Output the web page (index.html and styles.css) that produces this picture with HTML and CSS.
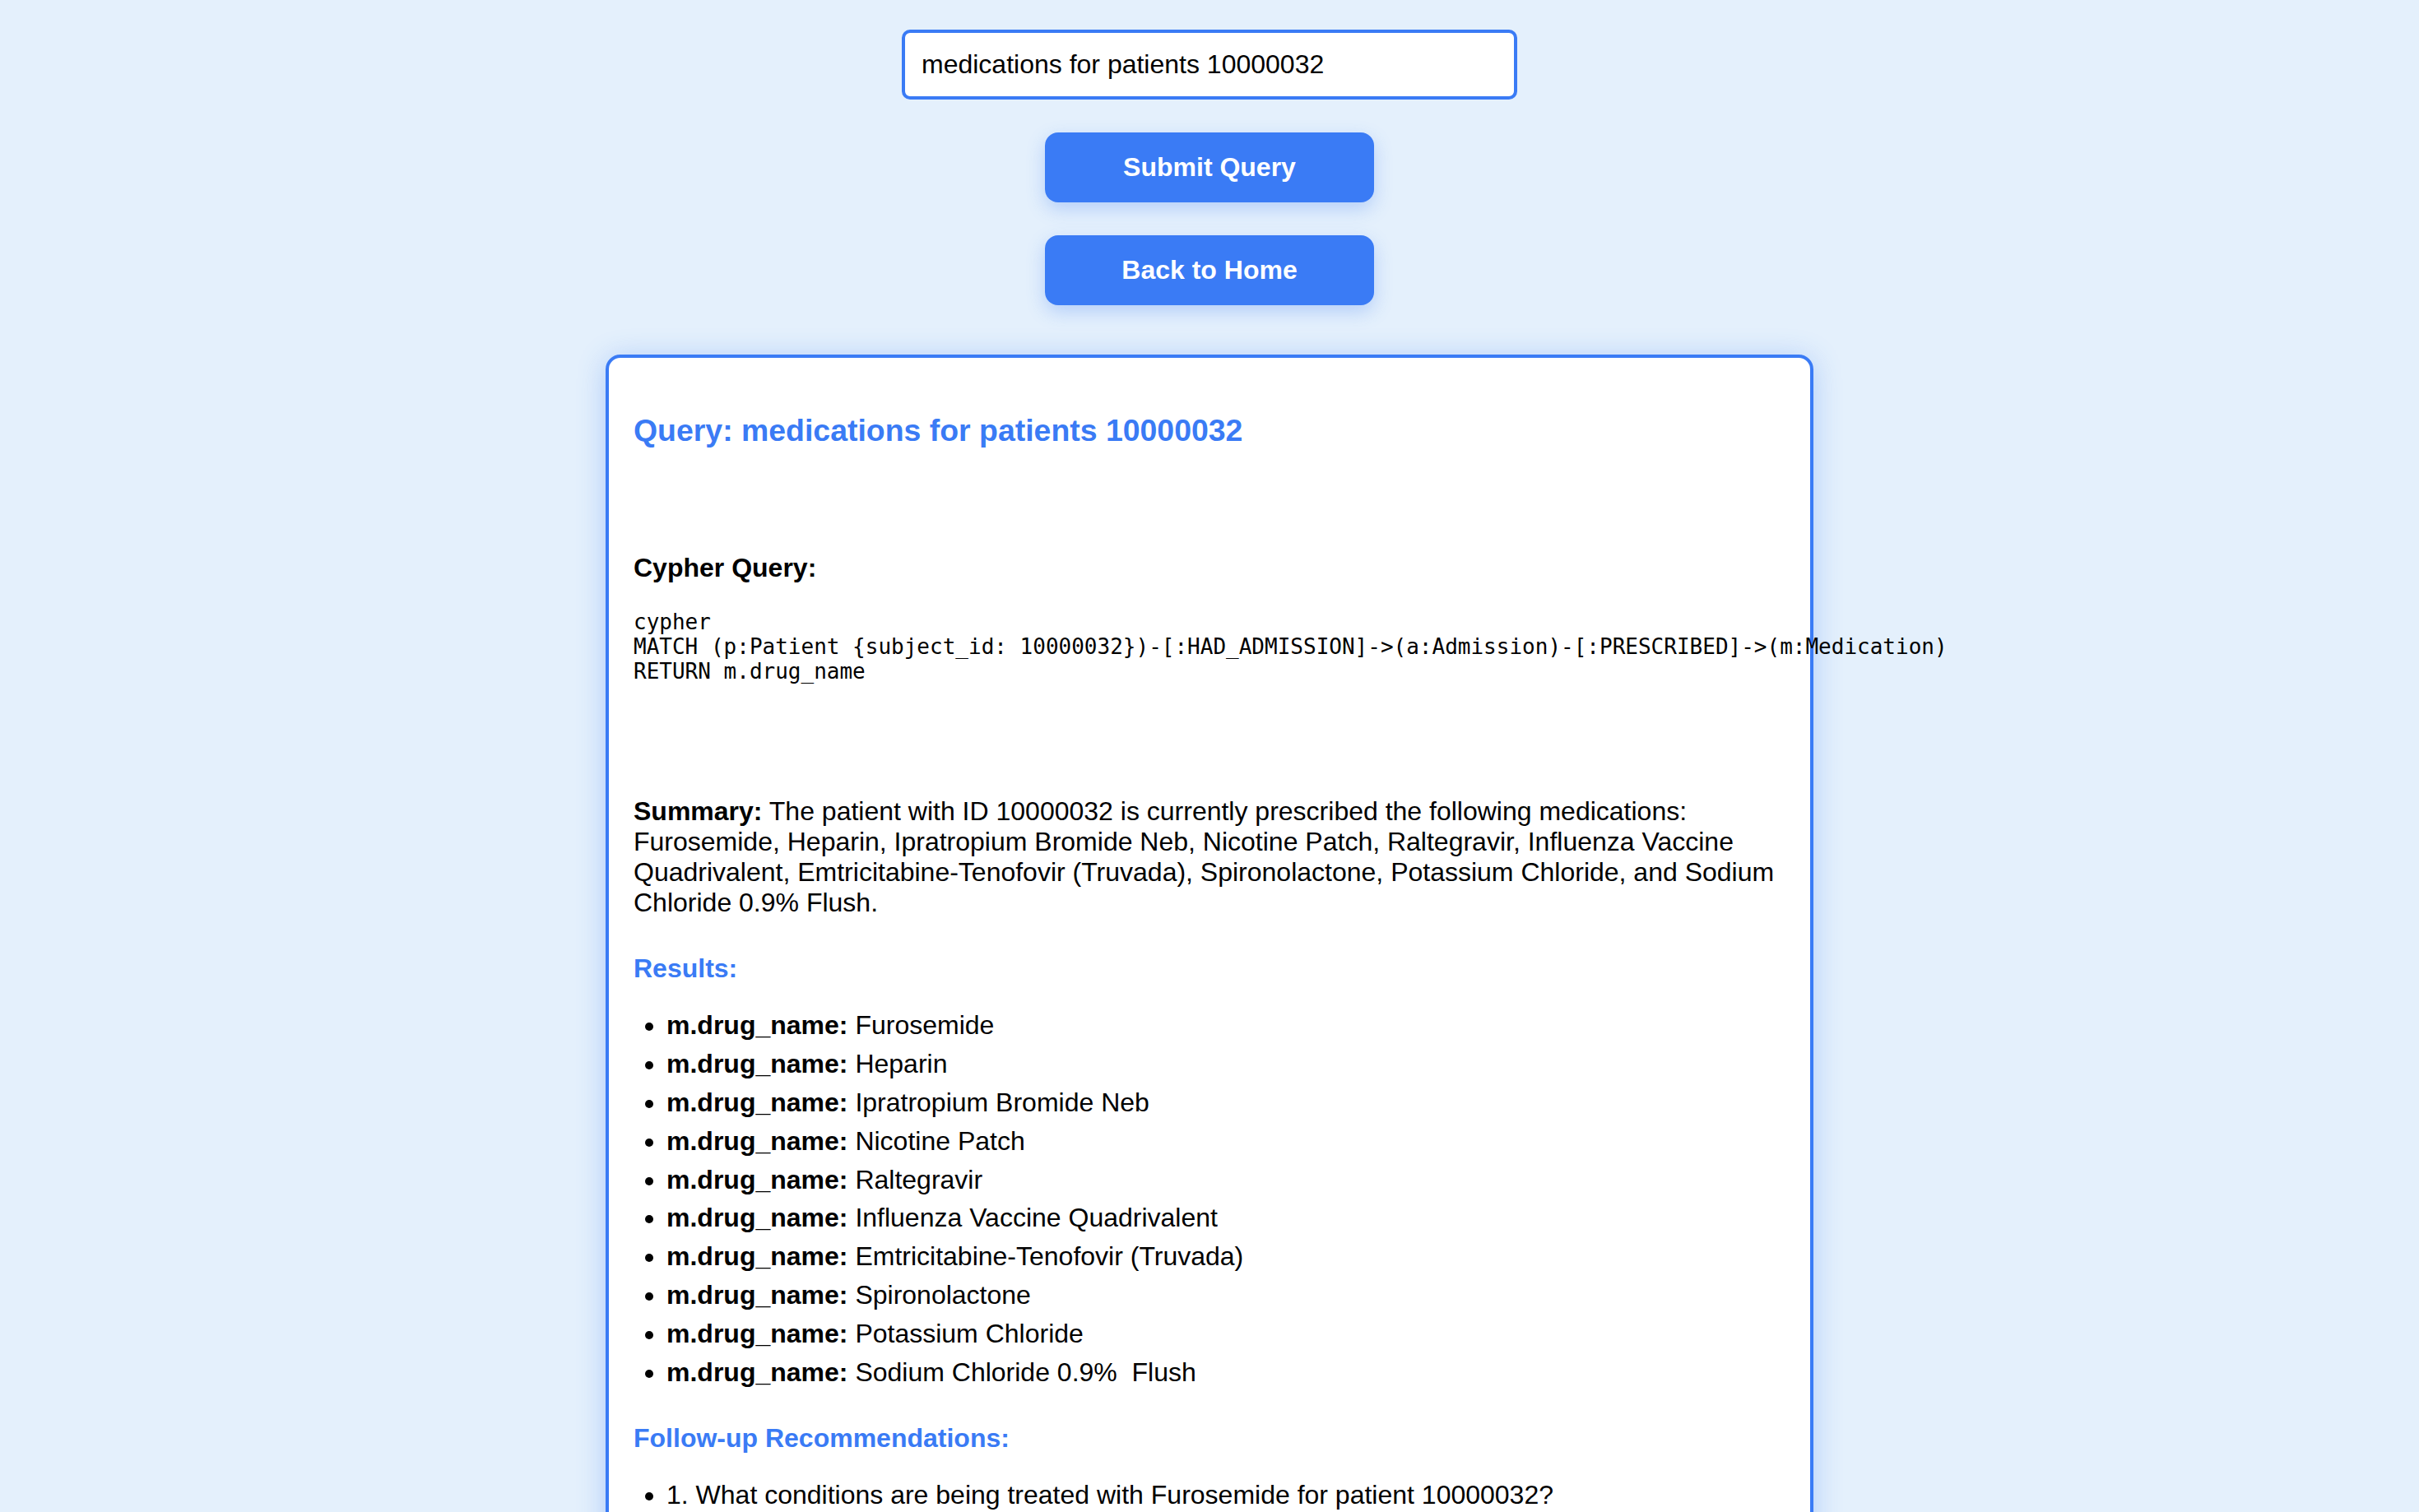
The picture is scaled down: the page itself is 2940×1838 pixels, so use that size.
FILE: index.html
```html
<!DOCTYPE html>
<html lang="en">
<head>
<meta charset="utf-8">
<title>Medical Graph Query</title>
<link rel="stylesheet" href="styles.css">
</head>
<body>
<div class="page">
  <form class="search">
    <input class="search-input" type="text" value="medications for patients 10000032">
    <button class="btn btn-submit" type="button">Submit Query</button>
  </form>
  <a class="btn btn-home" href="#">Back to Home</a>

  <section class="card">
    <h3 class="card-title">Query: medications for patients 10000032</h3>

    <p class="label"><strong>Cypher Query:</strong></p>
    <pre class="code">cypher
MATCH (p:Patient {subject_id: 10000032})-[:HAD_ADMISSION]-&gt;(a:Admission)-[:PRESCRIBED]-&gt;(m:Medication)
RETURN m.drug_name</pre>

    <p class="summary"><strong>Summary:</strong> The patient with ID 10000032 is currently prescribed the following medications: Furosemide, Heparin, Ipratropium Bromide Neb, Nicotine Patch, Raltegravir, Influenza Vaccine Quadrivalent, Emtricitabine-Tenofovir (Truvada), Spironolactone, Potassium Chloride, and Sodium Chloride 0.9% Flush.</p>

    <h4 class="section-title">Results:</h4>
    <ul class="list">
      <li><strong>m.drug_name:</strong> Furosemide</li>
      <li><strong>m.drug_name:</strong> Heparin</li>
      <li><strong>m.drug_name:</strong> Ipratropium Bromide Neb</li>
      <li><strong>m.drug_name:</strong> Nicotine Patch</li>
      <li><strong>m.drug_name:</strong> Raltegravir</li>
      <li><strong>m.drug_name:</strong> Influenza Vaccine Quadrivalent</li>
      <li><strong>m.drug_name:</strong> Emtricitabine-Tenofovir (Truvada)</li>
      <li><strong>m.drug_name:</strong> Spironolactone</li>
      <li><strong>m.drug_name:</strong> Potassium Chloride</li>
      <li><strong>m.drug_name:</strong> Sodium Chloride 0.9%&nbsp; Flush</li>
    </ul>

    <h4 class="section-title section-follow">Follow-up Recommendations:</h4>
    <ul class="list">
      <li>1. What conditions are being treated with Furosemide for patient 10000032?</li>
      <li>2. What were the dosages of Heparin administered to patient 10000032?</li>
      <li>3. Which lab results are associated with the admissions of patient 10000032?</li>
    </ul>
  </section>
</div>
</body>
</html>
```

FILE: styles.css
```css
html, body {
  margin: 0;
  padding: 0;
}

body {
  background: #e4f0fc;
  font-family: "Liberation Sans", Arial, Helvetica, sans-serif;
  font-size: 32px;
  color: #000;
}

.page {
  display: flex;
  flex-direction: column;
  align-items: center;
  padding-top: 36px;
  padding-bottom: 60px;
}

.search {
  display: flex;
  flex-direction: column;
  align-items: center;
  margin: 0;
}

.search-input {
  box-sizing: border-box;
  width: 748px;
  height: 85px;
  padding: 0 20px;
  border: 4px solid #3a7bf5;
  border-radius: 10px;
  background: #fff;
  font-family: "Liberation Sans", Arial, Helvetica, sans-serif;
  font-size: 32px;
  color: #000;
  outline: none;
}

.btn {
  box-sizing: border-box;
  width: 400px;
  height: 85px;
  display: flex;
  align-items: center;
  justify-content: center;
  margin-top: 40px;
  border: none;
  border-radius: 16px;
  background: #3a7bf5;
  color: #fff;
  font-family: "Liberation Sans", Arial, Helvetica, sans-serif;
  font-size: 32px;
  font-weight: bold;
  text-decoration: none;
  box-shadow: 0 8px 22px rgba(58, 123, 245, 0.28);
  cursor: pointer;
}

.card {
  box-sizing: border-box;
  width: 1468px;
  margin-top: 60px;
  padding: 30px 30px 40px;
  background: #fff;
  border: 4px solid #3a7bf5;
  border-radius: 18px;
  box-shadow: 0 4px 34px rgba(58, 123, 245, 0.32);
}

.card-title {
  margin: 37px 0 0;
  font-size: 37.44px;
  font-weight: bold;
  color: #3a7bf5;
  line-height: normal;
}

.label {
  margin: 127px 0 32px;
  line-height: 37px;
}

.code {
  margin: 0 0 137px;
  font-family: "DejaVu Sans Mono", Menlo, monospace;
  font-size: 26px;
  line-height: normal;
  color: #000;
  overflow: visible;
}

.summary {
  margin: 0;
  line-height: 37px;
}

.section-title {
  margin: 43px 0 32px;
  font-size: 32px;
  font-weight: bold;
  color: #3a7bf5;
  line-height: 37px;
}

.list {
  margin: 0;
  padding-left: 40px;
}

.list li {
  line-height: 37px;
  margin-bottom: 9.9px;
}
```
